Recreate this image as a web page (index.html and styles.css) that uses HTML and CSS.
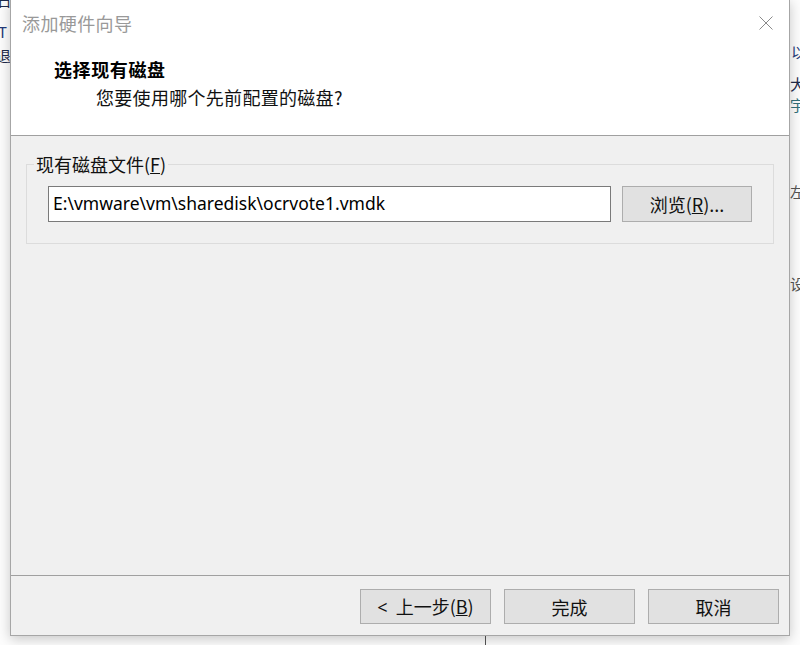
FILE: index.html
```html
<!DOCTYPE html>
<html lang="zh-CN">
<head>
<meta charset="utf-8">
<title>添加硬件向导</title>
<link rel="stylesheet" href="styles.css">
</head>
<body>
<div class="desktop">
  <span class="frag f1">石</span>
  <span class="frag f2">T E</span>
  <span class="frag f3">退</span>
  <span class="frag f4">以</span>
  <span class="frag f5">大</span>
  <span class="frag f6">宇</span>
  <span class="frag f7">左</span>
  <span class="frag f8">设</span>
  <div class="vline"></div>
</div>

<div class="dialog">
  <div class="titlebar">
    <span class="title">添加硬件向导</span>
    <svg class="close" width="14" height="14" viewBox="0 0 14 14"><path d="M0.5 0.5 L13.5 13.5 M13.5 0.5 L0.5 13.5" stroke="#8a8a8a" stroke-width="1" fill="none"/></svg>
  </div>
  <div class="header">
    <div class="heading">选择现有磁盘</div>
    <div class="subheading">您要使用哪个先前配置的磁盘?</div>
  </div>
  <div class="body">
    <fieldset class="group">
      <legend class="group-label">现有磁盘文件(<u>F</u>)</legend>
      <div class="row">
        <div class="textbox">E:\vmware\vm\sharedisk\ocrvote1.vmdk</div>
        <button class="btn browse">浏览(<u>R</u>)...</button>
      </div>
    </fieldset>
  </div>
  <div class="footer">
    <button class="btn"><span class="lt">&lt;</span>上一步(<u>B</u>)</button>
    <button class="btn">完成</button>
    <button class="btn">取消</button>
  </div>
</div>
</body>
</html>
```
FILE: styles.css
```css
* { box-sizing: border-box; }
html, body {
  margin: 0;
  padding: 0;
}
body {
  width: 800px;
  height: 645px;
  overflow: hidden;
  position: relative;
  background: #fdfdfd;
  font-family: "Noto Sans CJK SC", sans-serif;
}
.desktop {
  position: absolute;
  inset: 0;
}
.frag {
  position: absolute;
  font-size: 15px;
  line-height: 16px;
  color: #1d2a4a;
}
.f1 { left: -4px; top: -8px; }
.f2 { left: -2px; top: 24px; color: #243a7a; }
.f3 { left: -4px; top: 48px; }
.f4 { left: 791px; top: 44px; color: #2a3c7a; }
.f5 { left: 790px; top: 76px; }
.f6 { left: 790px; top: 97px; color: #33707a; }
.f7 { left: 790px; top: 184px; color: #555; }
.f8 { left: 790px; top: 276px; color: #555; }
.vline {
  position: absolute;
  left: 485px;
  top: 630px;
  width: 1px;
  height: 15px;
  background: #555;
}
.dialog {
  position: absolute;
  left: 10px;
  top: -1px;
  width: 780px;
  height: 637px;
  border: 1px solid #a6a6a6;
  background: #f0f0f0;
  display: flex;
  flex-direction: column;
  box-shadow: 0 3px 12px rgba(0,0,0,0.22);
}
.titlebar {
  height: 46px;
  background: #fff;
  display: flex;
  align-items: center;
  justify-content: space-between;
  padding: 0 16px 0 11px;
  flex-shrink: 0;
}
.title {
  font-size: 18px;
  color: #999;
  letter-spacing: 0.4px;
}
.close { margin-top: -1px; }
.header {
  height: 90px;
  background: #fff;
  border-bottom: 1px solid #a0a0a0;
  padding: 12px 0 0 43px;
  flex-shrink: 0;
}
.heading {
  font-size: 18px;
  font-weight: bold;
  line-height: 22px;
  color: #000;
  letter-spacing: 0.6px;
}
.subheading {
  font-size: 18px;
  line-height: 22px;
  margin: 6px 0 0 42px;
  color: #111;
  letter-spacing: 0.3px;
}
.body {
  flex: 1;
  padding: 18px 15px 0 15px;
}
.group {
  margin: 0;
  border: 1px solid #dcdcdc;
  padding: 11px 21px 20px 21px;
  height: 90px;
}
.group-label {
  font-size: 18px;
  line-height: 20px;
  padding: 0 2px;
  margin-left: -14px;
  color: #111;
}
.row {
  display: flex;
  gap: 11px;
  margin-top: 1px;
}
.textbox {
  width: 563px;
  height: 36px;
  background: #fff;
  border: 1px solid #7a7a7a;
  font-family: "Noto Sans", "Noto Sans CJK SC", sans-serif;
  font-size: 17.5px;
  line-height: 32px;
  padding-left: 4px;
  color: #000;
  white-space: nowrap;
}
.btn {
  width: 131px;
  height: 35px;
  background: #e1e1e1;
  border: 1px solid #adadad;
  font-family: "Noto Sans CJK SC", sans-serif;
  font-size: 18px;
  color: #111;
  padding: 0;
  line-height: 30px;
}
.btn u { text-decoration-thickness: 1px; }
.lt {
  font-family: "Noto Sans", sans-serif;
  margin-right: 8px;
}
.browse {
  width: 130px;
  height: 36px;
}
.footer {
  height: 60px;
  border-top: 1px solid #a0a0a0;
  display: flex;
  justify-content: flex-end;
  gap: 13px;
  padding: 13px 10px 0 0;
  flex-shrink: 0;
}
```
